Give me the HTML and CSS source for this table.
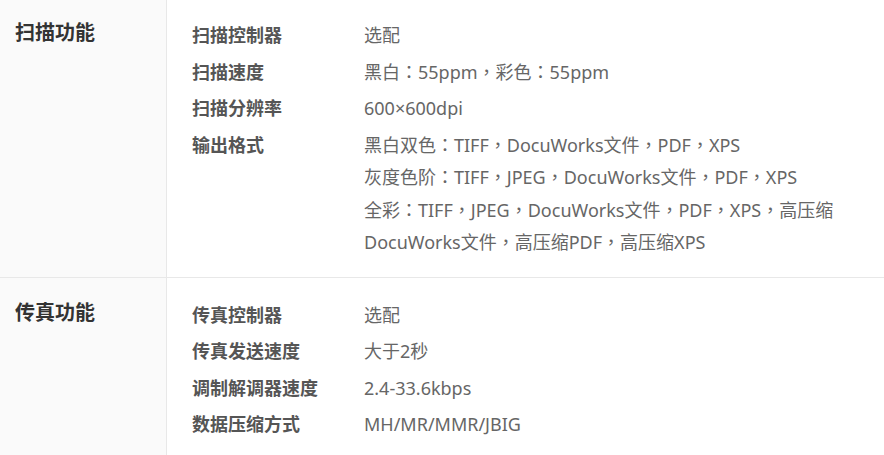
FILE: index.html
```html
<!DOCTYPE html>
<html lang="zh-CN">
<head>
    <meta charset="UTF-8">
    <title>规格参数</title>
    <link rel="stylesheet" href="styles.css">
</head>
<body>
    <div class="spec-table">
        <div class="spec-group">
            <div class="group-title">扫描功能</div>
            <div class="group-body">
                <div class="spec-row">
                    <div class="spec-name">扫描控制器</div>
                    <div class="spec-value">选配</div>
                </div>
                <div class="spec-row">
                    <div class="spec-name">扫描速度</div>
                    <div class="spec-value">黑白<i>：</i>55ppm<i>，</i>彩色<i>：</i>55ppm</div>
                </div>
                <div class="spec-row">
                    <div class="spec-name">扫描分辨率</div>
                    <div class="spec-value">600×600dpi</div>
                </div>
                <div class="spec-row">
                    <div class="spec-name">输出格式</div>
                    <div class="spec-value">黑白双色<i>：</i>TIFF<i>，</i>DocuWorks文件<i>，</i>PDF<i>，</i>XPS<br>灰度色阶<i>：</i>TIFF<i>，</i>JPEG<i>，</i>DocuWorks文件<i>，</i>PDF<i>，</i>XPS<br>全彩<i>：</i>TIFF<i>，</i>JPEG<i>，</i>DocuWorks文件<i>，</i>PDF<i>，</i>XPS<i>，</i>高压缩<br>DocuWorks文件<i>，</i>高压缩PDF<i>，</i>高压缩XPS</div>
                </div>
            </div>
        </div>
        <div class="spec-group">
            <div class="group-title">传真功能</div>
            <div class="group-body">
                <div class="spec-row">
                    <div class="spec-name">传真控制器</div>
                    <div class="spec-value">选配</div>
                </div>
                <div class="spec-row">
                    <div class="spec-name">传真发送速度</div>
                    <div class="spec-value">大于2秒</div>
                </div>
                <div class="spec-row">
                    <div class="spec-name">调制解调器速度</div>
                    <div class="spec-value">2.4-33.6kbps</div>
                </div>
                <div class="spec-row">
                    <div class="spec-name">数据压缩方式</div>
                    <div class="spec-value">MH/MR/MMR/JBIG</div>
                </div>
            </div>
        </div>
    </div>
</body>
</html>
```

FILE: styles.css
```css
* {
    margin: 0;
    padding: 0;
    box-sizing: border-box;
}

body {
    font-family: "Noto Sans", "Noto Sans CJK SC", sans-serif;
    background: #fff;
    overflow: hidden;
}

.spec-table {
    margin-top: -2px;
}

.spec-group {
    display: flex;
    border-bottom: 1px solid #e8e8e8;
}

.group-title {
    width: 167px;
    flex-shrink: 0;
    background: #fafafa;
    border-right: 1px solid #e8e8e8;
    padding: 20px 0 0 15px;
    font-size: 20px;
    line-height: 30px;
    font-weight: bold;
    color: #333;
}

.group-body {
    flex: 1;
    padding: 19px 0 16px 25px;
}

.spec-row {
    display: flex;
    padding: 2px 0;
    font-size: 18px;
    line-height: 32.5px;
}

.spec-name {
    width: 172px;
    flex-shrink: 0;
    font-weight: bold;
    color: #555;
}

.spec-value {
    color: #666;
    white-space: nowrap;
}

/* 全角标点居中显示 */
.spec-value i {
    font-style: normal;
    font-family: "Noto Sans CJK TC", sans-serif;
    font-feature-settings: "locl" 0;
    line-height: 1;
}
```
